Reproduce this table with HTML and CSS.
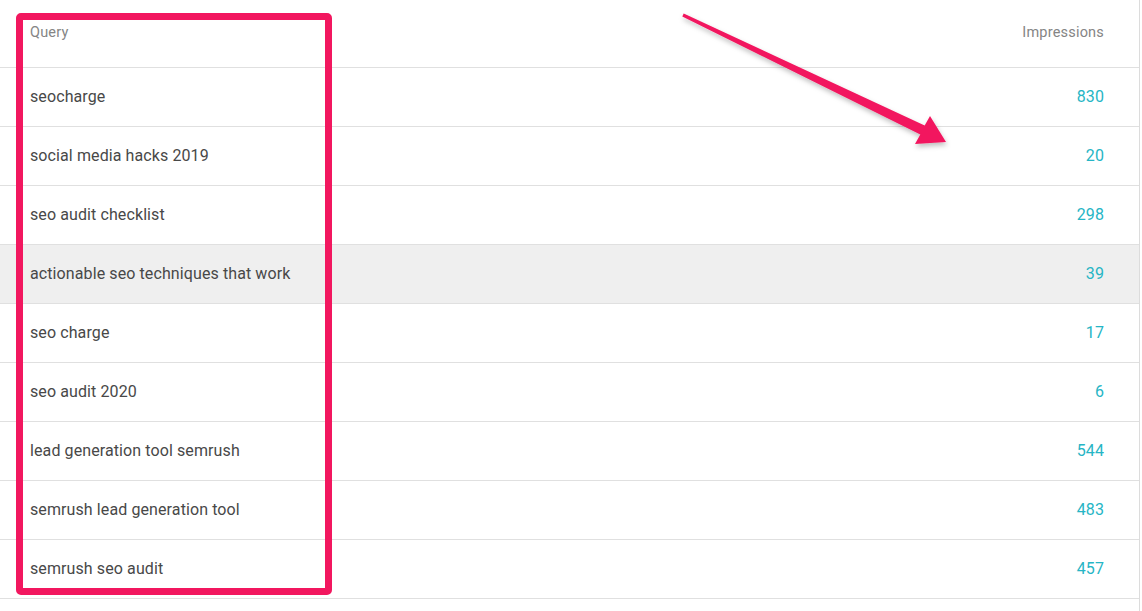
FILE: index.html
```html
<!DOCTYPE html>
<html lang="en">
<head>
  <meta charset="UTF-8">
  <title>Queries</title>
  <link rel="stylesheet" href="styles.css">
</head>
<body>
  <div class="table">
    <div class="row head">
      <span>Query</span>
      <span>Impressions</span>
    </div>
    <div class="row"><span>seocharge</span><span class="num">830</span></div>
    <div class="row"><span>social media hacks 2019</span><span class="num">20</span></div>
    <div class="row"><span>seo audit checklist</span><span class="num">298</span></div>
    <div class="row hover"><span>actionable seo techniques that work</span><span class="num">39</span></div>
    <div class="row"><span>seo charge</span><span class="num">17</span></div>
    <div class="row"><span>seo audit 2020</span><span class="num">6</span></div>
    <div class="row"><span>lead generation tool semrush</span><span class="num">544</span></div>
    <div class="row"><span>semrush lead generation tool</span><span class="num">483</span></div>
    <div class="row"><span>semrush seo audit</span><span class="num">457</span></div>

    <!-- annotation overlays -->
    <div class="highlight-box"></div>
    <svg class="arrow" width="1142" height="200" viewBox="0 0 1142 200">
      <defs>
        <filter id="shadow" x="-10%" y="-10%" width="120%" height="130%">
          <feDropShadow dx="1" dy="3" stdDeviation="2.5" flood-color="#000" flood-opacity="0.25"/>
        </filter>
      </defs>
      <polygon filter="url(#shadow)" fill="#f2175f"
        points="683.7,13.6 924.7,125.5 930,116 946,142 915,144 920.3,134.5 682.3,16.4"/>
    </svg>
  </div>
</body>
</html>
```

FILE: styles.css
```css
body { margin: 0; background: #fff; font-family: Roboto, "Liberation Sans", Arial, sans-serif; }
.table { position: relative; width: 1139px; border-right: 1px solid #dcdcdc; min-height: 611px; }
.row {
  display: flex;
  justify-content: space-between;
  align-items: center;
  height: 57px;
  padding: 0 35px 1px 30px;
  border-bottom: 1px solid #e0e0e0;
  font-size: 16px;
  letter-spacing: 0.1px;
  color: #484848;
}
.row.head {
  height: 67px;
  padding-bottom: 0;
  align-items: flex-start;
  font-size: 14.5px;
  letter-spacing: 0.2px;
  color: #858585;
}
.row.head span { margin-top: 24px; }
.row.hover { background: #efefef; }
.num { color: #26b5c5; }
.highlight-box {
  position: absolute;
  left: 16px;
  top: 13px;
  width: 302px;
  height: 568px;
  border: 7px solid #f2175f;
  border-radius: 5px;
}
.arrow { position: absolute; left: 0; top: 0; }
```
